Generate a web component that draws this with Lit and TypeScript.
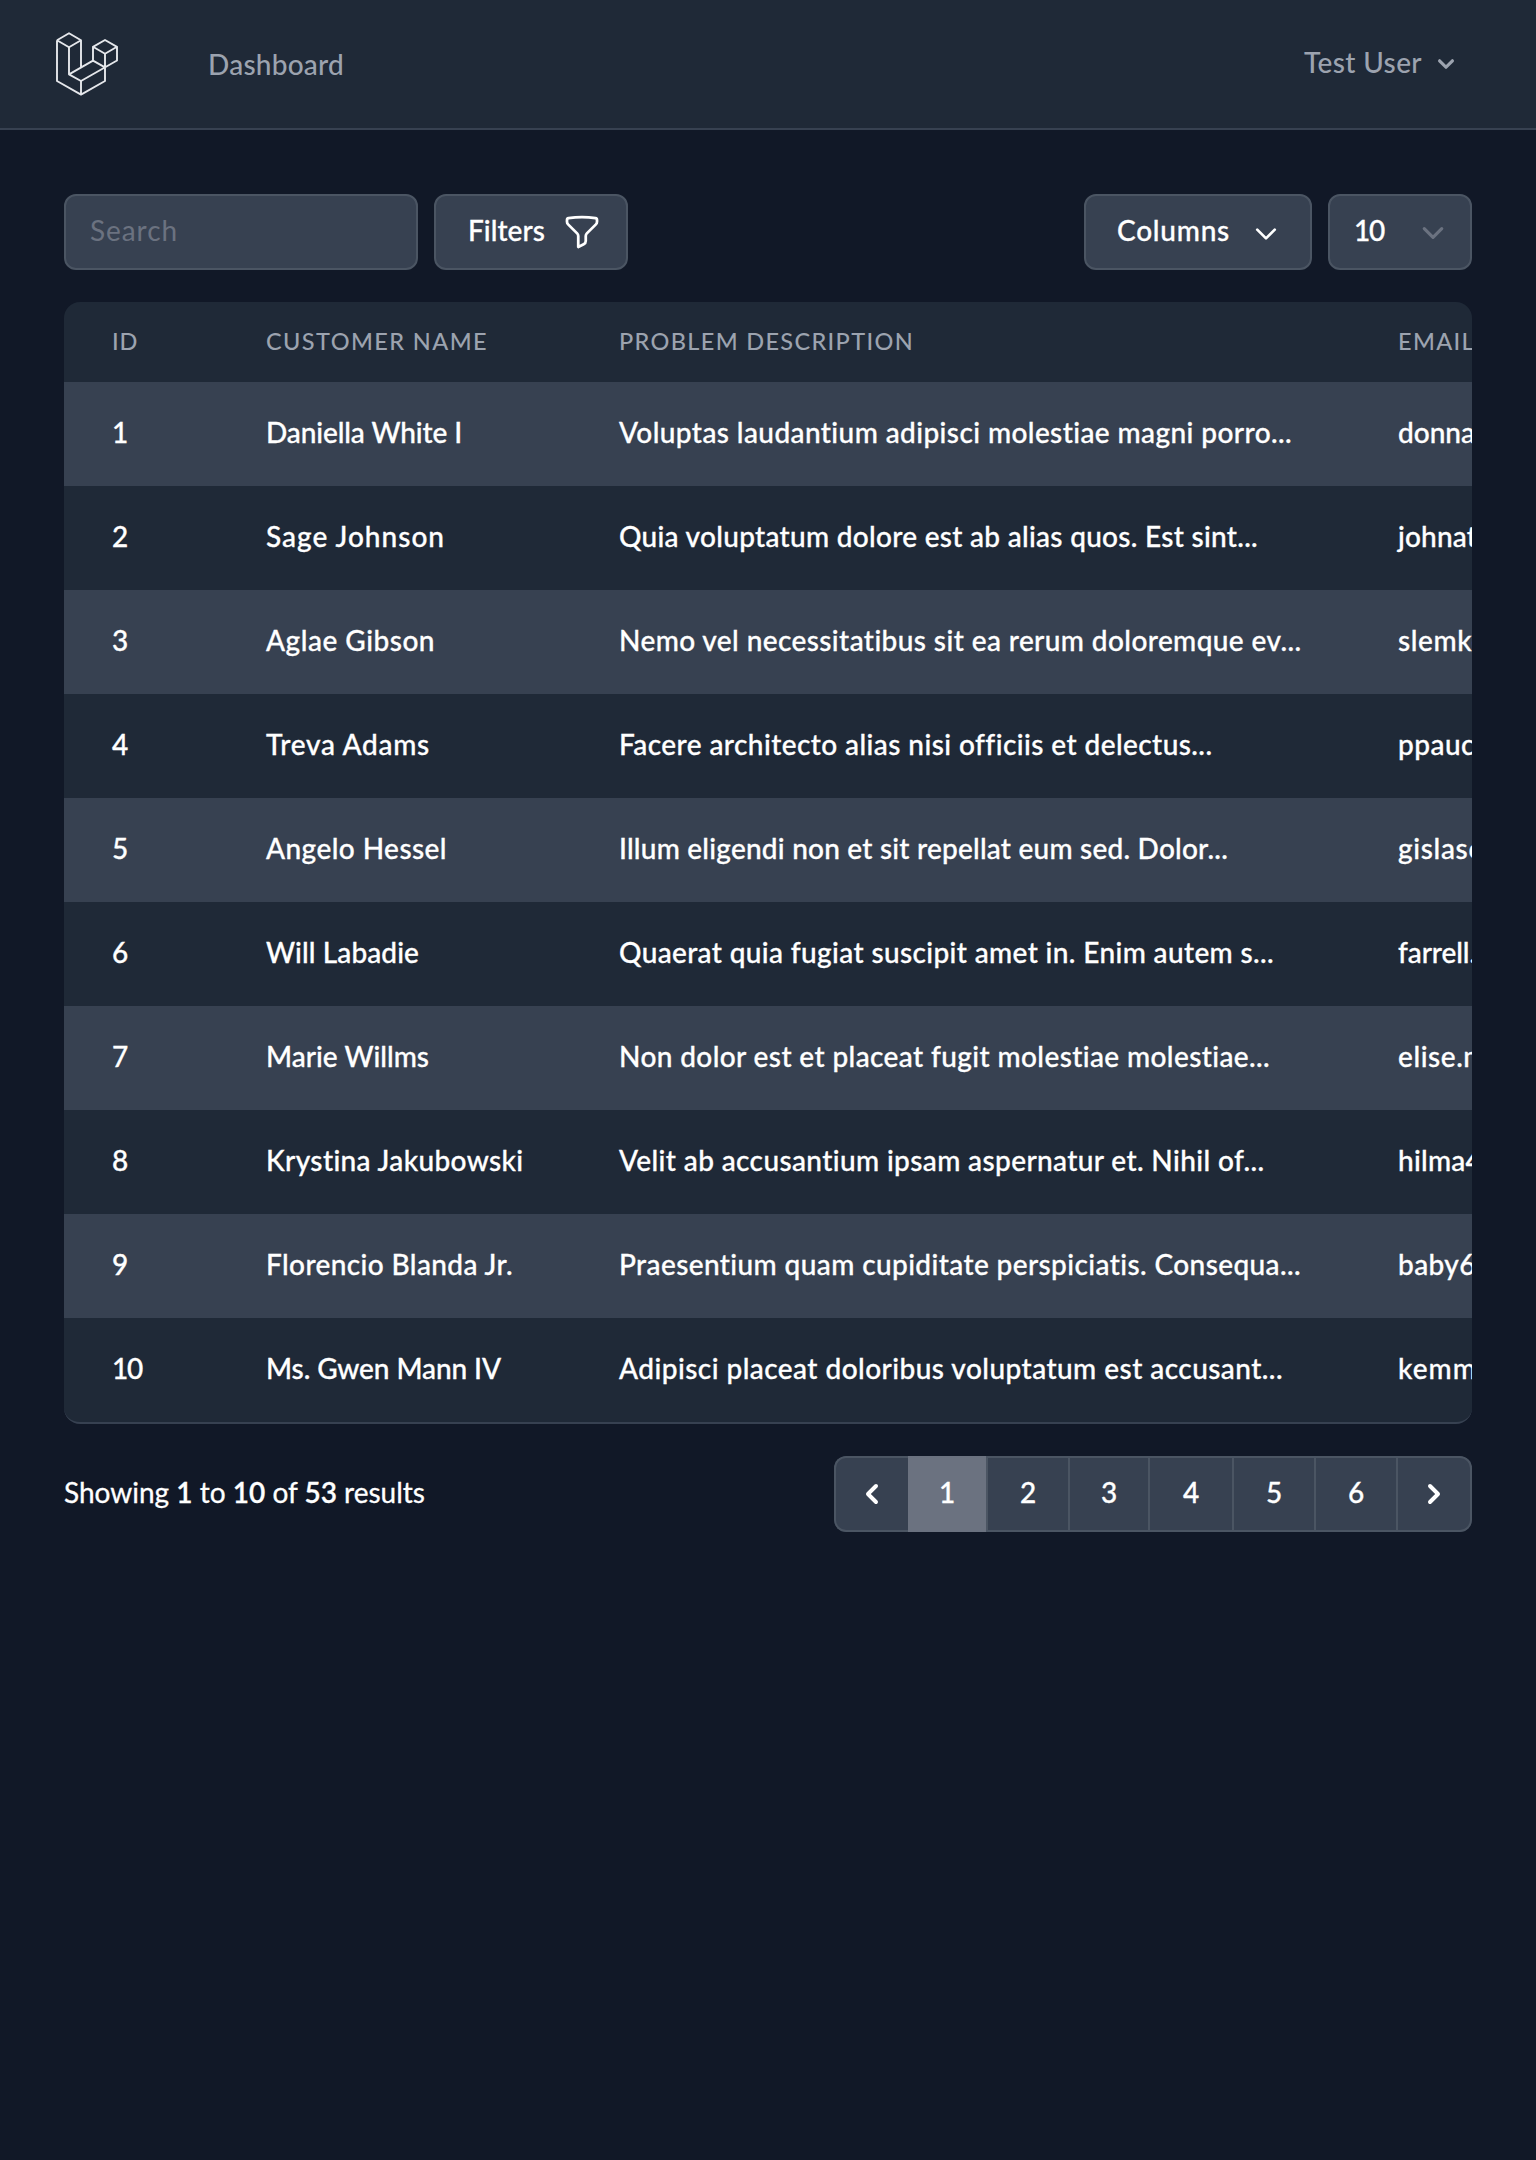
import { LitElement, html, css, svg } from "lit";
import { customElement, property } from "lit/decorators.js";

/** A single line of text tracked so that its glyphs span `width` pixels. */
@customElement("tracked-text")
export class TrackedText extends LitElement {
  @property() text = "";
  @property({ type: Number }) width = 0;
  static styles = css`
    :host { display: inline-block; white-space: nowrap; }
    .line { display: inline-block; white-space: pre; }
  `;
  render() {
    return html`<span class="line">${this.text}</span>`;
  }
  updated() {
    const line = this.renderRoot.querySelector<HTMLElement>(".line")!;
    if (!this.width) return;
    line.style.letterSpacing = "0px";
    const natural = line.getBoundingClientRect().width;
    line.style.letterSpacing = `${(this.width - natural) / Math.max(1, this.text.length)}px`;
  }
}

const fit = (text: string, width = 0) =>
  html`<tracked-text .text=${text} .width=${width}></tracked-text>`;

interface Row {
  id: string;
  name: [string, number];
  problem: [string, number];
  email: [string, number];
}

const ROWS: Row[] = [
  { id: "1", name: ["Daniella White I", 196], problem: ["Voluptas laudantium adipisci molestiae magni porro...", 674], email: ["donna", 77] },
  { id: "2", name: ["Sage Johnson", 179], problem: ["Quia voluptatum dolore est ab alias quos. Est sint...", 639], email: ["johnat", 79] },
  { id: "3", name: ["Aglae Gibson", 169], problem: ["Nemo vel necessitatibus sit ea rerum doloremque ev...", 683], email: ["slemke", 89] },
  { id: "4", name: ["Treva Adams", 164], problem: ["Facere architecto alias nisi officiis et delectus...", 592], email: ["ppauc", 77] },
  { id: "5", name: ["Angelo Hessel", 181], problem: ["Illum eligendi non et sit repellat eum sed. Dolor...", 609], email: ["gislaso", 87] },
  { id: "6", name: ["Will Labadie", 153], problem: ["Quaerat quia fugiat suscipit amet in. Enim autem s...", 655], email: ["farrell.", 78] },
  { id: "7", name: ["Marie Willms", 163], problem: ["Non dolor est et placeat fugit molestiae molestiae...", 652], email: ["elise.m", 89] },
  { id: "8", name: ["Krystina Jakubowski", 258], problem: ["Velit ab accusantium ipsam aspernatur et. Nihil of...", 646], email: ["hilma4", 84] },
  { id: "9", name: ["Florencio Blanda Jr.", 247], problem: ["Praesentium quam cupiditate perspiciatis. Consequa...", 683], email: ["baby6", 78] },
  { id: "10", name: ["Ms. Gwen Mann IV", 235], problem: ["Adipisci placeat doloribus voluptatum est accusant...", 664], email: ["kemm", 79] },
];

const PAGES: [string, string][] = [
  ["1", "active"], ["2", ""], ["3", "narrow"], ["4", "wide"], ["5", ""], ["6", ""],
];

const chevron = (cls: string) => svg`
  <svg class=${cls} viewBox="0 0 24 24" fill="none" stroke="currentColor" stroke-linecap="round" stroke-linejoin="round">
    <path d="M19.5 8.25l-7.5 7.5-7.5-7.5" />
  </svg>`;

@customElement("app-root")
export class AppRoot extends LitElement {
  static styles = css`
    :host {
      display: block;
      min-height: 2160px;
      background: #111827;
      color: #fff;
      font-family: Lato, "Liberation Sans", sans-serif;
      font-size: 28px;
      line-height: 40px;
      font-weight: 500;
      -webkit-text-stroke: 0.3px currentColor;
    }
    * { box-sizing: border-box; }
    svg { display: block; flex: none; }
    .nav {
      display: flex;
      align-items: center;
      height: 130px;
      padding: 0 74px 0 56px;
      background: #1f2937;
      border-bottom: 2px solid #374151;
      color: #9ca3af;
      -webkit-text-stroke-width: 0;
    }
    .logo { width: 62px; height: 64px; fill: none; stroke: #e5e7eb; stroke-width: 1.9; stroke-linejoin: round; }
    .dashboard { margin-left: 90px; }
    .user { display: flex; align-items: center; gap: 8px; margin-left: auto; }
    .user tracked-text { padding-bottom: 4px; }
    .user-chevron { width: 32px; height: 32px; }
    main { padding: 64px 64px 0; }
    .toolbar { display: flex; gap: 16px; height: 76px; margin-bottom: 32px; }
    .box {
      display: flex;
      align-items: center;
      background: #374151;
      border: 2px solid #4b5563;
      border-radius: 12px;
      padding-bottom: 4px;
    }
    .search { width: 354px; padding-left: 24px; color: #6b7280; font-weight: 400; -webkit-text-stroke-width: 0; }
    .filters { width: 194px; padding-left: 32px; gap: 17px; }
    .columns { width: 228px; margin-left: auto; padding-left: 31px; gap: 22px; }
    .size { width: 144px; padding: 0 23px 4px 24px; justify-content: space-between; }
    .funnel { width: 40px; height: 40px; stroke-width: 1.65; margin-top: 4px; }
    .columns-chevron { width: 28px; height: 28px; stroke-width: 2.3; margin-top: 7px; }
    .size-chevron { width: 28px; height: 28px; stroke-width: 2.7; margin-top: 6px; color: #6b7280; }
    .table { border-radius: 16px; overflow: hidden; background: #1f2937; border-bottom: 2px solid #374151; }
    .row {
      display: grid;
      grid-template-columns: 154px 353px 779px 122px;
      height: 104px;
      align-items: center;
      padding-bottom: 5px;
    }
    .row.odd { background: #374151; }
    .row.head { height: 80px; color: #9ca3af; font-size: 23.5px; padding-bottom: 2px; -webkit-text-stroke-width: 0; }
    .cell { padding-left: 48px; white-space: nowrap; overflow: hidden; }
    .footer { display: flex; justify-content: space-between; align-items: center; margin-top: 32px; }
    .summary { padding-bottom: 4px; font-weight: 400; white-space: pre; }
    .summary b { font-weight: 600; }
    .pages { display: flex; height: 76px; background: #374151; border-radius: 12px; overflow: hidden; }
    .page {
      display: flex;
      align-items: center;
      justify-content: center;
      width: 82px;
      padding-bottom: 4px;
      border: 2px solid #4b5563;
      border-left-width: 0;
    }
    .page.narrow { width: 80px; }
    .page.wide { width: 84px; }
    .page.prev { width: 74px; padding: 0; border-left-width: 2px; border-right-width: 0; border-radius: 12px 0 0 12px; }
    .page.active { width: 80px; padding: 2px 0 6px; background: #6b7280; border-width: 0 2px 0 0; }
    .page.next { width: 74px; padding: 0; border-radius: 0 12px 12px 0; }
    .arrow { width: 40px; height: 40px; }
  `;

  render() {
    return html`
      <nav class="nav">
        <svg class="logo" viewBox="0 0 62 64">
          <path d="M1 8.2L13 1.2 25 8.2V36M1 8.2V49L25 62.6 49 49V21.8M1 8.2L13 15.2 25 8.2M13 15.2V42.3L25 49 61 28.5V14.8L49 8 37 14.8V28.6L13 42.3M37 14.8L49 21.8 61 14.8M37 28.6L49 35.4M25 49V62.6" />
        </svg>
        <span class="dashboard">${fit("Dashboard", 136)}</span>
        <span class="user">
          ${fit("Test User", 118)}
          <svg class="user-chevron" viewBox="0 0 20 20" fill="currentColor"><path fill-rule="evenodd" d="M5.293 7.293a1 1 0 011.414 0L10 10.586l3.293-3.293a1 1 0 111.414 1.414l-4 4a1 1 0 01-1.414 0l-4-4a1 1 0 010-1.414z" /></svg>
        </span>
      </nav>
      <main>
        <div class="toolbar">
          <div class="box search">${fit("Search", 88)}</div>
          <div class="box filters">
            ${fit("Filters", 77)}
            <svg class="funnel" viewBox="0 0 24 24" fill="none" stroke="currentColor" stroke-linecap="round" stroke-linejoin="round">
              <path d="M12 3c2.755 0 5.455.232 8.083.678.533.09.917.556.917 1.096v1.044a2.25 2.25 0 01-.659 1.591l-5.432 5.432a2.25 2.25 0 00-.659 1.591v2.927a2.25 2.25 0 01-1.244 2.013L9.75 21v-6.568a2.25 2.25 0 00-.659-1.591L3.659 7.409A2.25 2.25 0 013 5.818V4.774c0-.54.384-1.006.917-1.096A48.32 48.32 0 0112 3z" />
            </svg>
          </div>
          <div class="box columns">${fit("Columns", 113)}${chevron("columns-chevron")}</div>
          <div class="box size">${fit("10", 30)}${chevron("size-chevron")}</div>
        </div>
        <div class="table">
          <div class="row head">
            <div class="cell">${fit("ID", 26)}</div>
            <div class="cell">${fit("CUSTOMER NAME", 222)}</div>
            <div class="cell">${fit("PROBLEM DESCRIPTION", 295)}</div>
            <div class="cell">${fit("EMAIL", 77)}</div>
          </div>
          ${ROWS.map((r, i) => html`
            <div class="row ${i % 2 ? "" : "odd"}">
              <div class="cell">${fit(r.id, r.id.length > 1 ? 30 : 0)}</div>
              <div class="cell">${fit(...r.name)}</div>
              <div class="cell">${fit(...r.problem)}</div>
              <div class="cell">${fit(...r.email)}</div>
            </div>`)}
        </div>
        <div class="footer">
          <div class="summary">Showing <b>1</b> to <b>10</b> of <b>53</b> results</div>
          <div class="pages">
            <div class="page prev">
              <svg class="arrow" viewBox="0 0 20 20" fill="currentColor"><path fill-rule="evenodd" d="M12.707 5.293a1 1 0 010 1.414L9.414 10l3.293 3.293a1 1 0 01-1.414 1.414l-4-4a1 1 0 010-1.414l4-4a1 1 0 011.414 0z" /></svg>
            </div>
            ${PAGES.map(([n, cls]) => html`<div class="page ${cls}">${n}</div>`)}
            <div class="page next">
              <svg class="arrow" viewBox="0 0 20 20" fill="currentColor"><path fill-rule="evenodd" d="M7.293 14.707a1 1 0 010-1.414L10.586 10 7.293 6.707a1 1 0 011.414-1.414l4 4a1 1 0 010 1.414l-4 4a1 1 0 01-1.414 0z" /></svg>
            </div>
          </div>
        </div>
      </main>
    `;
  }
}
